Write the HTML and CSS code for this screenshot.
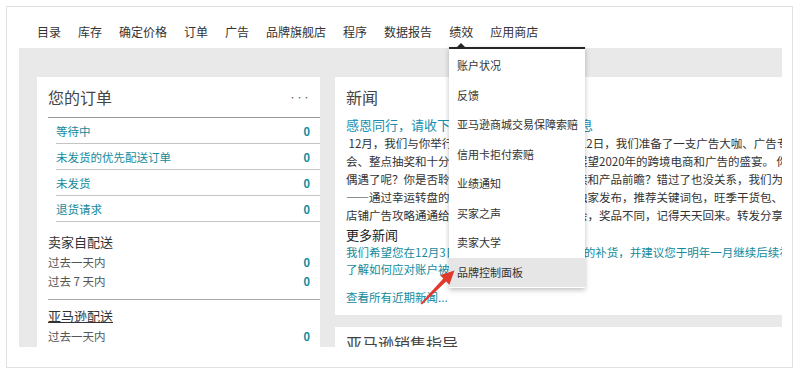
FILE: index.html
```html
<!DOCTYPE html>
<html lang="zh-CN">
<head>
  <meta charset="UTF-8">
  <title>卖家平台</title>
  <link rel="stylesheet" href="styles.css">
</head>
<body>
  <div class="frame">
    <nav class="topnav">
      <span>目录</span>
      <span>库存</span>
      <span>确定价格</span>
      <span>订单</span>
      <span>广告</span>
      <span>品牌旗舰店</span>
      <span>程序</span>
      <span>数据报告</span>
      <span>绩效</span>
      <span>应用商店</span>
    </nav>

    <div class="board">
      <section class="card orders">
        <div class="card-head">
          <h2>您的订单</h2>
          <span class="dots">•••</span>
        </div>
        <ul class="order-list">
          <li><a>等待中</a><b>0</b></li>
          <li><a>未发货的优先配送订单</a><b>0</b></li>
          <li><a>未发货</a><b>0</b></li>
          <li><a>退货请求</a><b>0</b></li>
        </ul>
        <div class="ship">
          <h3>卖家自配送</h3>
          <div class="ship-row"><span>过去一天内</span><b>0</b></div>
          <div class="ship-row"><span>过去 7 天内</span><b>0</b></div>
        </div>
        <div class="ship last">
          <h3 class="underline">亚马逊配送</h3>
          <div class="ship-row"><span>过去一天内</span><b>0</b></div>
        </div>
      </section>

      <div class="col">
        <section class="card news">
          <h2>新闻</h2>
          <p class="headline"><a>感恩同行，请收下亚马逊广告的年终好消息</a></p>
          <p class="line">&nbsp;12月，我们与你举行了年终盛典，在12月9日-12日，我们准备了一支广告大咖、广告专家组成的分享团</p>
          <p class="line">会、整点抽奖和十分精彩的直播活动，一起来展望2020年的跨境电商和广告的盛宴。 你是否在直播间</p>
          <p class="line">偶遇了呢？你是否聆听了广告大咖们的趋势解读和产品前瞻？错过了也没关系，我们为你整理了</p>
          <p class="line">——通过幸运转盘的方式领取：最新广告工具独家发布，推荐关键词包，旺季干货包、广告报告</p>
          <p class="line">店铺广告攻略通通给你，每天都有一次抽奖机会，奖品不同，记得天天回来。转发分享给好友</p>
          <h4>更多新闻</h4>
          <p class="more"><a>我们希望您在12月3日之前完成节日季热卖商品的补货，并建议您于明年一月继续后续补货</a></p>
          <p class="more"><a>了解如何应对账户被冒用的风险</a></p>
          <p class="all"><a>查看所有近期新闻...</a></p>
        </section>
        <section class="card guide">
          <h2>亚马逊销售指导</h2>
        </section>
      </div>
    </div>

    <div class="dropdown">
      <span class="caret"></span>
      <div class="menu-item">账户状况</div>
      <div class="menu-item">反馈</div>
      <div class="menu-item">亚马逊商城交易保障索赔</div>
      <div class="menu-item">信用卡拒付索赔</div>
      <div class="menu-item">业绩通知</div>
      <div class="menu-item">买家之声</div>
      <div class="menu-item">卖家大学</div>
      <div class="menu-item active">品牌控制面板</div>
    </div>

    <svg class="arrow" width="787" height="362" viewBox="0 0 787 362">
      <polygon points="413.5,296.5 436.3,271.6 433,268.2 447.5,263.5 442.4,277.8 439.1,274.4 415,297.5" fill="#e0392d"/>
    </svg>
  </div>
</body>
</html>
```

FILE: styles.css
```css
body {
  margin: 0;
  background: #fff;
  font-family: "Noto Sans CJK SC", "Noto Sans", sans-serif;
  color: #333;
}

.frame {
  position: relative;
  margin: 6px;
  width: 787px;
  height: 362px;
  border: 1px solid #e2e2e2;
  box-sizing: border-box;
  overflow: hidden;
}

.topnav {
  display: flex;
  gap: 17px;
  height: 41px;
  box-sizing: border-box;
  padding: 17px 0 0 30px;
  font-size: 12px;
  line-height: 16px;
  color: #333;
}

.board {
  display: flex;
  gap: 15px;
  margin-left: 12px;
  width: 763px;
  height: 299px;
  box-sizing: border-box;
  padding: 29px 0 0 18px;
  background: #e9e9e9;
  overflow: hidden;
}

.card {
  background: #fff;
  padding-left: 11px;
  box-sizing: border-box;
  flex-shrink: 0;
}

.card h2 {
  margin: 0;
  font-size: 16px;
  font-weight: normal;
  line-height: 20px;
  color: #444;
}

a {
  color: #138a9c;
}

b {
  color: #138a9c;
  font-size: 11px;
  font-weight: bold;
}

/* orders */
.orders {
  width: 283px;
}

.card-head {
  display: flex;
  justify-content: space-between;
  align-items: center;
  padding: 10px 10px 10px 0;
  border-bottom: 1px solid #9a9a9a;
}

.dots {
  font-size: 7px;
  color: #555;
}

.order-list {
  list-style: none;
  margin: 0 0 0 8px;
  padding: 0;
}

.order-list li {
  display: flex;
  justify-content: space-between;
  align-items: center;
  height: 25px;
  padding-right: 10px;
  border-bottom: 1px solid #c4c4c4;
  font-size: 11.5px;
}

.ship {
  padding: 10px 10px 9px 0;
  border-bottom: 1px solid #a8a8a8;
}

.ship.last {
  padding-top: 6px;
  border-bottom: none;
}

.ship h3 {
  margin: 0;
  font-size: 13px;
  font-weight: normal;
  line-height: 20px;
  color: #333;
}

.ship h3.underline {
  text-decoration: underline;
}

.ship-row {
  display: flex;
  justify-content: space-between;
  align-items: center;
  height: 19px;
  font-size: 11.5px;
  color: #555;
}

/* news */
.col {
  flex: 1;
  display: flex;
  flex-direction: column;
  gap: 12px;
  min-width: 0;
}

.news {
  padding-top: 10px;
  padding-bottom: 9px;
  overflow: hidden;
}

.news p {
  margin: 0;
  white-space: nowrap;
}

.headline {
  margin-top: 9px !important;
  font-size: 13px;
  line-height: 18px;
}

.headline a {
  color: #1c8fae;
}

.line {
  font-size: 11.5px;
  line-height: 18px;
  color: #333;
}

.news h4 {
  margin: 2px 0 0;
  font-size: 13px;
  font-weight: normal;
  line-height: 18px;
  color: #222;
}

.more {
  font-size: 11.5px;
  line-height: 17px;
}

.all {
  margin-top: 10px !important;
  font-size: 11.5px;
  line-height: 18px;
}

.guide {
  padding-top: 6px;
  height: 40px;
}

/* dropdown menu */
.dropdown {
  position: absolute;
  left: 442px;
  top: 40px;
  width: 136px;
  padding: 2px 0 1px;
  background: #fff;
  border-top: 2px solid #262626;
  box-shadow: 0 2px 5px rgba(0,0,0,0.25);
}

.caret {
  position: absolute;
  left: 8px;
  top: -6px;
  width: 0;
  height: 0;
  border-left: 4px solid transparent;
  border-right: 4px solid transparent;
  border-bottom: 4px solid #262626;
}

.menu-item {
  height: 29.5px;
  line-height: 29.5px;
  padding-left: 8px;
  font-size: 11px;
  color: #333;
  white-space: nowrap;
}

.menu-item.active {
  background: #e6e6e6;
}

.arrow {
  position: absolute;
  left: 0;
  top: 0;
  pointer-events: none;
}
```
